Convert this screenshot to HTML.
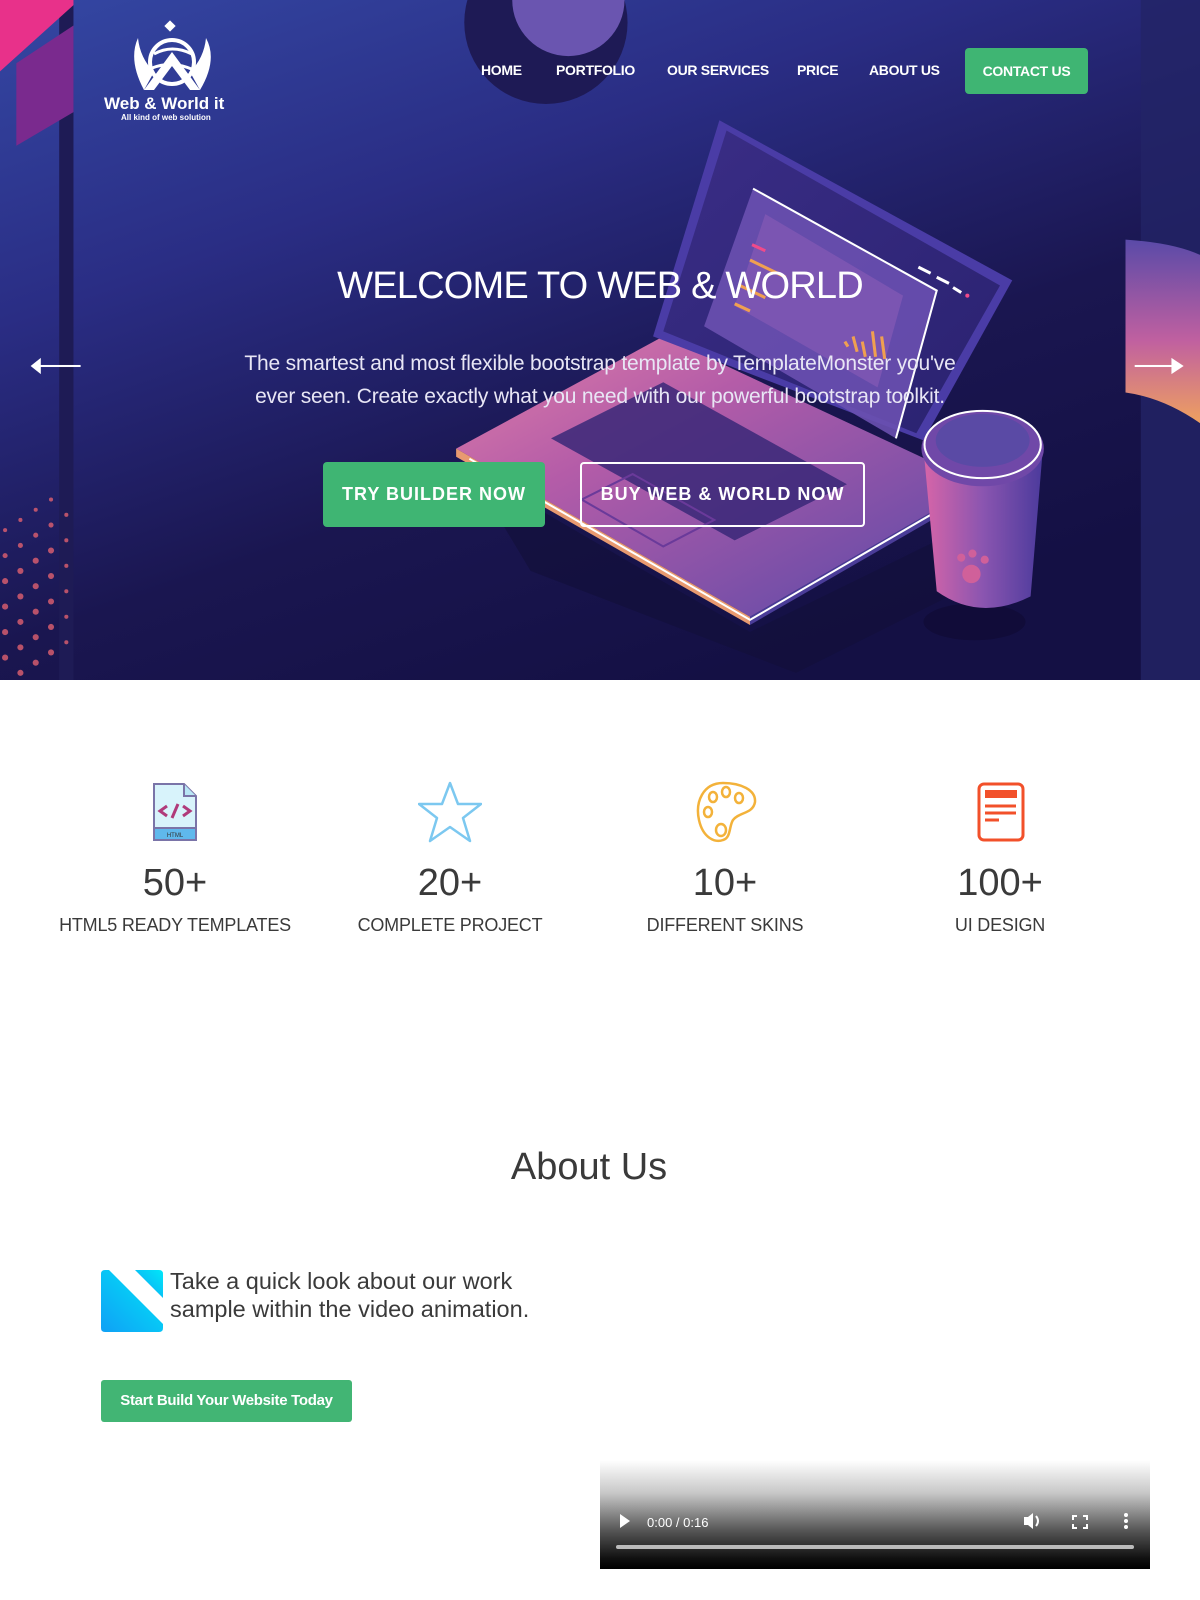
<!DOCTYPE html>
<html><head><meta charset="utf-8">
<style>
*{margin:0;padding:0;box-sizing:border-box}
body{width:1200px;height:1600px;background:#fff;font-family:"Liberation Sans",sans-serif;position:relative;overflow:hidden}
.hero{position:absolute;left:0;top:0;width:1200px;height:680px;overflow:hidden}
.hero svg.bg{position:absolute;left:0;top:0}
.abs{position:absolute}
.nav a{position:absolute;top:62px;color:#fff;font-weight:bold;font-size:14px;letter-spacing:-0.3px;text-decoration:none;white-space:nowrap}
.contact{position:absolute;left:965px;top:48px;width:123px;height:46px;background:#3fb573;border-radius:4px;color:#fff;font-weight:bold;font-size:14px;line-height:46px;text-align:center;letter-spacing:-0.3px}
h1{position:absolute;left:0;width:1200px;top:265px;text-align:center;color:#fff;font-weight:normal;font-size:38px;letter-spacing:-0.8px}
.lead{position:absolute;left:100px;width:1000px;top:347px;text-align:center;color:#e8e6f5;font-size:21px;line-height:33px;font-weight:300;letter-spacing:-0.2px;white-space:nowrap}
.btn1{position:absolute;left:323px;top:462px;width:222px;height:65px;background:#3fb573;border-radius:4px;color:#fff;font-weight:bold;font-size:18px;line-height:65px;text-align:center;letter-spacing:1px}
.btn2{position:absolute;left:580px;top:462px;width:285px;height:65px;border:2px solid #fff;border-radius:4px;color:#fff;font-weight:bold;font-size:18px;line-height:61px;text-align:center;letter-spacing:1px}
.stat{position:absolute;top:780px;width:270px;text-align:center;color:#3a3a3a}
.stat .n{position:absolute;top:82px;width:270px;font-size:38px;letter-spacing:0}
.stat .l{position:absolute;top:135px;width:270px;font-size:18px;letter-spacing:-0.2px}
.stat svg{position:absolute;left:103px;top:0}
</style></head><body>
<div class="hero">
<svg class="bg" width="1200" height="680" viewBox="0 0 1176 667" preserveAspectRatio="none">
<defs>
<linearGradient id="g" x1="0" y1="0" x2="0.6" y2="1"><stop offset="0" stop-color="#3447a3"/><stop offset="0.35" stop-color="#2a2d84"/><stop offset="0.7" stop-color="#1a1650"/><stop offset="1" stop-color="#141044"/></linearGradient>
<linearGradient id="lp" x1="0" y1="0" x2="1" y2="1"><stop offset="0" stop-color="#e07fa8"/><stop offset="0.35" stop-color="#b45ca8"/><stop offset="1" stop-color="#5548a8"/></linearGradient>
<linearGradient id="sc" x1="0" y1="0" x2="1" y2="1"><stop offset="0" stop-color="#3a2d86"/><stop offset="1" stop-color="#2a2270"/></linearGradient>
<linearGradient id="cup" x1="0" y1="0" x2="1" y2="0"><stop offset="0" stop-color="#d765a8"/><stop offset="0.5" stop-color="#8a55b0"/><stop offset="1" stop-color="#4b3a9c"/></linearGradient>
<linearGradient id="arc" x1="0" y1="0" x2="0" y2="1"><stop offset="0" stop-color="#5a4aa8"/><stop offset="0.55" stop-color="#c060a0"/><stop offset="1" stop-color="#eea060"/></linearGradient>
</defs>
<rect width="1176" height="667" fill="url(#g)"/>
<rect x="1118" y="0" width="58" height="667" fill="#232466" opacity="0.8"/>
<path d="M1103 235 Q1150 238 1176 250 L1176 415 Q1140 390 1103 385 Z" fill="url(#arc)"/>
<rect x="58" y="0" width="14" height="667" fill="#1e1b55"/>
<polygon points="0,0 72,0 72,5 0,70" fill="#e8318a"/>
<polygon points="16,62 72,25 72,110 16,143" fill="#7a2a8e"/>
<circle cx="535" cy="22" r="80" fill="#1e1a55"/>
<circle cx="557" cy="0" r="55" fill="#6a55b0"/>
<g fill="#e06070" opacity="0.8">
<circle cx="5" cy="520" r="2"/><circle cx="20" cy="510" r="2"/><circle cx="35" cy="500" r="2"/><circle cx="50" cy="490" r="2"/>
<circle cx="5" cy="545" r="2.5"/><circle cx="20" cy="535" r="2.5"/><circle cx="35" cy="525" r="2.5"/><circle cx="50" cy="515" r="2.5"/><circle cx="65" cy="505" r="2"/>
<circle cx="5" cy="570" r="3"/><circle cx="20" cy="560" r="3"/><circle cx="35" cy="550" r="3"/><circle cx="50" cy="540" r="3"/><circle cx="65" cy="530" r="2"/>
<circle cx="5" cy="595" r="3"/><circle cx="20" cy="585" r="3"/><circle cx="35" cy="575" r="3"/><circle cx="50" cy="565" r="3"/><circle cx="65" cy="555" r="2"/>
<circle cx="5" cy="620" r="3"/><circle cx="20" cy="610" r="3"/><circle cx="35" cy="600" r="3"/><circle cx="50" cy="590" r="3"/><circle cx="65" cy="580" r="2"/>
<circle cx="5" cy="645" r="3"/><circle cx="20" cy="635" r="3"/><circle cx="35" cy="625" r="3"/><circle cx="50" cy="615" r="3"/><circle cx="65" cy="605" r="2"/>
<circle cx="20" cy="660" r="3"/><circle cx="35" cy="650" r="3"/><circle cx="50" cy="640" r="3"/><circle cx="65" cy="630" r="2"/>
</g>
<polygon points="460,460 735,620 980,500 980,560 780,660 520,560" fill="#120f3a" opacity="0.7"/>
<polygon points="447,440 650,330 960,475 735,605" fill="url(#lp)"/>
<polygon points="447,440 735,605 735,613 447,448" fill="#e89a70"/>
<polygon points="735,605 960,475 960,483 735,613" fill="#4a3c98"/>
<polyline points="460,450 735,608 955,480" fill="none" stroke="#fff" stroke-width="2"/>
<g fill="#3a2878" opacity="0.85">
<polygon points="540,430 650,375 830,475 720,530"/>
</g>
<polygon points="570,490 620,465 700,510 650,536" fill="none" stroke="#6a3a9a" stroke-width="2"/>
<polygon points="640,330 705,118 992,275 905,432" fill="#4a3ca6"/>
<polygon points="650,325 712,128 980,280 898,425" fill="url(#sc)"/>
<polygon points="690,320 738,185 918,285 878,430" fill="#6a50b0" opacity="0.9"/>
<polyline points="738,185 918,285 878,430" fill="none" stroke="#fff" stroke-width="2"/>
<polygon points="720,300 750,210 885,290 860,380" fill="#8a5cb8" opacity="0.6"/>
<g stroke-width="3"><line x1="737" y1="240" x2="750" y2="246" stroke="#f04a8a"/><line x1="735" y1="255" x2="770" y2="272" stroke="#f0a050"/><line x1="725" y1="280" x2="750" y2="292" stroke="#f0a050"/><line x1="720" y1="298" x2="735" y2="305" stroke="#f0a050"/></g>
<g stroke="#f0a050" stroke-width="3"><line x1="828" y1="335" x2="831" y2="340"/><line x1="836" y1="330" x2="840" y2="345"/><line x1="845" y1="335" x2="848" y2="350"/><line x1="855" y1="325" x2="858" y2="350"/><line x1="864" y1="330" x2="867" y2="352"/></g>
<g stroke="#fff" stroke-width="3"><line x1="900" y1="262" x2="912" y2="268"/><line x1="918" y1="272" x2="930" y2="278"/><line x1="934" y1="282" x2="942" y2="287"/></g>
<circle cx="948" cy="290" r="2" fill="#f04a8a"/>
<ellipse cx="955" cy="610" rx="50" ry="18" fill="#100c35" opacity="0.7"/>
<path d="M905 440 L918 580 Q960 610 1010 585 L1022 440 Z" fill="url(#cup)"/>
<ellipse cx="963" cy="440" rx="60" ry="37" fill="#7048a8"/>
<ellipse cx="963" cy="436" rx="57" ry="33" fill="none" stroke="#fff" stroke-width="2"/>
<ellipse cx="963" cy="432" rx="46" ry="26" fill="#5a4aa5"/>
<circle cx="952" cy="563" r="9" fill="#d0609a"/><circle cx="942" cy="547" r="4" fill="#d0609a"/><circle cx="953" cy="543" r="4" fill="#d0609a"/><circle cx="965" cy="549" r="4" fill="#d0609a"/>
<g fill="#fff"><rect x="35" y="358" width="44" height="2"/><polygon points="30,359 40,351 40,367"/>
<rect x="1112" y="358" width="44" height="2"/><polygon points="1160,359 1148,351 1148,367"/></g>
</svg>
<svg class="abs" style="left:130px;top:20px" width="85" height="75" viewBox="0 0 85 75">
<rect x="36" y="2" width="8" height="8" transform="rotate(45 40 6)" fill="#fff"/>
<path d="M8 18 Q-2 40 14 70 L24 52 Q10 38 8 18Z" fill="#fff"/>
<path d="M76 18 Q88 40 70 70 L60 52 Q74 38 76 18Z" fill="#fff"/>
<circle cx="42" cy="42" r="22" fill="none" stroke="#fff" stroke-width="4"/>
<path d="M14 70 L42 32 L70 70 L60 70 L42 46 L24 70Z" fill="#fff"/>
<path d="M24 34 Q42 24 62 34 M22 48 Q42 40 64 50" stroke="#fff" stroke-width="3" fill="none"/>
</svg>
<div class="abs" style="left:104px;top:94px;color:#fff;font-weight:bold;font-size:17px;white-space:nowrap">Web &amp; World it</div>
<div class="abs" style="left:121px;top:113px;color:#fff;font-weight:bold;font-size:8px;white-space:nowrap">All kind of web solution</div>
<div class="nav">
<a style="left:481px">HOME</a><a style="left:556px">PORTFOLIO</a><a style="left:667px">OUR SERVICES</a><a style="left:797px">PRICE</a><a style="left:869px">ABOUT US</a>
</div>
<div class="contact">CONTACT US</div>
<h1>WELCOME TO WEB &amp; WORLD</h1>
<div class="lead">The smartest and most flexible bootstrap template by TemplateMonster you've<br>ever seen. Create exactly what you need with our powerful bootstrap toolkit.</div>
<div class="btn1">TRY BUILDER NOW</div>
<div class="btn2">BUY WEB &amp; WORLD NOW</div>
</div>

<div class="stat" style="left:40px">
<svg width="64" height="64" viewBox="0 0 64 64"><path d="M11 4 H41 L53 16 V60 H11Z" fill="#d8f3fb" stroke="#7a74a8" stroke-width="2"/><path d="M41 4 V16 H53" fill="#b8e6f5" stroke="#7a74a8" stroke-width="2"/><rect x="11" y="48" width="42" height="12" fill="#5fb8ec" stroke="#7a74a8" stroke-width="2"/><text x="32" y="57" font-size="6" text-anchor="middle" fill="#333" font-family="Liberation Sans">HTML</text><path d="M24 26 L17 31 L24 36 M40 26 L47 31 L40 36 M35 24 L29 38" stroke="#b03a7a" stroke-width="3" fill="none"/></svg>
<div class="n">50+</div><div class="l">HTML5 READY TEMPLATES</div></div>
<div class="stat" style="left:315px">
<svg width="64" height="64" viewBox="0 0 64 64"><polygon points="32,3 40,24 63,24 45,38 52,61 32,47 12,61 19,38 1,24 24,24" fill="none" stroke="#7cc8f0" stroke-width="2.5" stroke-linejoin="round"/></svg>
<div class="n">20+</div><div class="l">COMPLETE PROJECT</div></div>
<div class="stat" style="left:590px">
<svg width="64" height="64" viewBox="0 0 64 64"><path d="M30 3 C10 3 2 22 6 40 C10 58 22 63 30 60 C38 58 36 46 40 40 C46 32 60 34 62 22 C63 10 48 3 30 3Z" fill="none" stroke="#f3b23a" stroke-width="2.5"/><g fill="none" stroke="#f3b23a" stroke-width="2.5"><ellipse cx="20" cy="17" rx="4" ry="5"/><ellipse cx="33" cy="12" rx="4" ry="5"/><ellipse cx="46" cy="18" rx="4" ry="5"/><ellipse cx="15" cy="32" rx="4" ry="5"/><ellipse cx="28" cy="50" rx="5" ry="6"/></g></svg>
<div class="n">10+</div><div class="l">DIFFERENT SKINS</div></div>
<div class="stat" style="left:865px">
<svg width="64" height="64" viewBox="0 0 64 64"><rect x="11" y="4" width="44" height="56" rx="5" fill="none" stroke="#f2502a" stroke-width="3"/><rect x="17" y="10" width="32" height="8" fill="#f2502a"/><g stroke="#f2502a" stroke-width="3"><line x1="17" y1="26" x2="48" y2="26"/><line x1="17" y1="33" x2="48" y2="33"/><line x1="17" y1="40" x2="31" y2="40"/></g></svg>
<div class="n">100+</div><div class="l">UI DESIGN</div></div>

<div class="abs" style="left:0;width:1178px;top:1146px;text-align:center;font-size:38px;color:#3a3a3a">About Us</div>
<svg class="abs" style="left:101px;top:1270px" width="62" height="62" viewBox="0 0 62 62"><defs><linearGradient id="ab" x1="0" y1="1" x2="1" y2="0"><stop offset="0" stop-color="#10a0f5"/><stop offset="1" stop-color="#00e8f8"/></linearGradient></defs><path d="M4 0 H8 L62 54 V58 Q62 62 58 62 H4 Q0 62 0 58 V4 Q0 0 4 0Z" fill="url(#ab)"/><path d="M34 0 H58 Q62 0 62 4 V28 Z" fill="url(#ab)"/></svg>
<div class="abs" style="left:170px;top:1267px;font-size:23.5px;line-height:28px;color:#3a3a3a">Take a quick look about our work<br>sample within the video animation.</div>
<div class="abs" style="left:101px;top:1380px;width:251px;height:42px;background:#42b574;border-radius:3px;color:#fff;font-weight:bold;font-size:15px;line-height:42px;text-align:center;letter-spacing:-0.3px">Start Build Your Website Today</div>

<div class="abs" style="left:600px;top:1460px;width:550px;height:109px;background:linear-gradient(#fff 0%,#c8c8c8 30%,#555 65%,#111 90%,#000 100%)"></div>
<svg class="abs" style="left:600px;top:1460px" width="550" height="109">
<polygon points="20,54 30,61 20,68" fill="#fff"/>
<text x="47" y="67" fill="#fff" font-size="13" font-family="Liberation Sans">0:00 / 0:16</text>
<path d="M424 57 H428 L433 53 V69 L428 65 H424Z" fill="#fff"/><path d="M436 56 Q440 61 436 66" stroke="#fff" stroke-width="2" fill="none"/>
<path d="M473 60 V56 H477 M483 56 H487 V60 M487 64 V68 H483 M477 68 H473 V64" stroke="#fff" stroke-width="2" fill="none"/>
<circle cx="526" cy="55" r="2" fill="#fff"/><circle cx="526" cy="61" r="2" fill="#fff"/><circle cx="526" cy="67" r="2" fill="#fff"/>
<rect x="16" y="85" width="518" height="4" rx="2" fill="#bbb"/>
</svg>
</body></html>
